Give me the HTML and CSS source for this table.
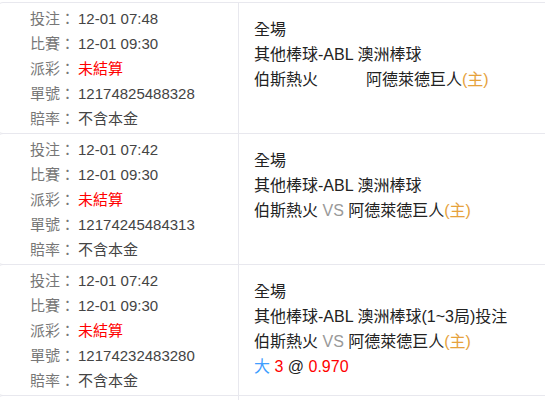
FILE: index.html
```html
<!DOCTYPE html>
<html lang="zh-Hant">
<head>
    <meta charset="UTF-8">
    <meta name="viewport" content="width=device-width, initial-scale=1.0">
    <title>注單記錄</title>
    <link rel="stylesheet" href="styles.css">
</head>
<body>
    <div class="bet-list">
        <!-- 注單 1 -->
        <div class="bet-row">
            <div class="bet-info">
                <div class="info-line"><span class="info-label">投注：</span><span class="info-value">12-01 07:48</span></div>
                <div class="info-line"><span class="info-label">比賽：</span><span class="info-value">12-01 09:30</span></div>
                <div class="info-line"><span class="info-label">派彩：</span><span class="info-value status-open">未結算</span></div>
                <div class="info-line"><span class="info-label">單號：</span><span class="info-value">12174825488328</span></div>
                <div class="info-line"><span class="info-label">賠率：</span><span class="info-value">不含本金</span></div>
            </div>
            <div class="bet-detail">
                <div class="detail-line">全場</div>
                <div class="detail-line">其他棒球-ABL 澳洲棒球</div>
                <div class="detail-line">伯斯熱火<span class="vs-blank"></span>阿德萊德巨人<span class="home">(主)</span></div>
            </div>
        </div>

        <!-- 注單 2 -->
        <div class="bet-row">
            <div class="bet-info">
                <div class="info-line"><span class="info-label">投注：</span><span class="info-value">12-01 07:42</span></div>
                <div class="info-line"><span class="info-label">比賽：</span><span class="info-value">12-01 09:30</span></div>
                <div class="info-line"><span class="info-label">派彩：</span><span class="info-value status-open">未結算</span></div>
                <div class="info-line"><span class="info-label">單號：</span><span class="info-value">12174245484313</span></div>
                <div class="info-line"><span class="info-label">賠率：</span><span class="info-value">不含本金</span></div>
            </div>
            <div class="bet-detail">
                <div class="detail-line">全場</div>
                <div class="detail-line">其他棒球-ABL 澳洲棒球</div>
                <div class="detail-line">伯斯熱火 <span class="vs">VS</span> 阿德萊德巨人<span class="home">(主)</span></div>
            </div>
        </div>

        <!-- 注單 3 -->
        <div class="bet-row">
            <div class="bet-info">
                <div class="info-line"><span class="info-label">投注：</span><span class="info-value">12-01 07:42</span></div>
                <div class="info-line"><span class="info-label">比賽：</span><span class="info-value">12-01 09:30</span></div>
                <div class="info-line"><span class="info-label">派彩：</span><span class="info-value status-open">未結算</span></div>
                <div class="info-line"><span class="info-label">單號：</span><span class="info-value">12174232483280</span></div>
                <div class="info-line"><span class="info-label">賠率：</span><span class="info-value">不含本金</span></div>
            </div>
            <div class="bet-detail">
                <div class="detail-line">全場</div>
                <div class="detail-line">其他棒球-ABL 澳洲棒球(1~3局)投注</div>
                <div class="detail-line">伯斯熱火 <span class="vs">VS</span> 阿德萊德巨人<span class="home">(主)</span></div>
                <div class="detail-line"><span class="pick">大</span> <span class="odds">3</span> @ <span class="odds">0.970</span></div>
            </div>
        </div>

        <!-- 下一筆注單（畫面外） -->
        <div class="bet-row bet-row-next">
            <div class="bet-info"></div>
            <div class="bet-detail"></div>
        </div>
    </div>
</body>
</html>
```

FILE: styles.css
```css
:root {
    --border-color: #e8e8ee;
    --label-color: #777;
    --value-color: #444;
    --text-dark: #222;
    --red: #ff0000;
    --orange: #e6a23c;
    --blue: #409eff;
}

body {
    margin: 0;
    overflow: hidden;
    background: #fff;
    font-family: "Liberation Sans", "Noto Sans CJK TC", sans-serif;
}

.bet-list {
    padding-top: 2px;
    margin-left: -3px;
    width: 620px;
}

.bet-row {
    display: flex;
    border: 1px solid var(--border-color);
    border-radius: 6px;
    margin-bottom: -1px;
}

.bet-row-next {
    height: 20px;
}

.bet-info {
    width: 208px;
    flex-shrink: 0;
    padding: 3px 0 2px 32px;
    border-right: 1px solid var(--border-color);
    font-size: 15px;
    line-height: 25px;
}

.info-line {
    white-space: nowrap;
}

.info-label {
    color: var(--label-color);
    margin-right: 3px;
}

.info-value {
    color: var(--value-color);
}

.status-open {
    color: var(--red);
}

.bet-detail {
    flex: 1;
    padding: 14px 0 0 15px;
    font-size: 16px;
    line-height: 25px;
    color: var(--text-dark);
}

.detail-line {
    white-space: nowrap;
}

.vs {
    color: #999;
}

.vs-blank {
    display: inline-block;
    width: 48px;
}

.home {
    color: var(--orange);
}

.pick {
    color: var(--blue);
}

.odds {
    color: var(--red);
}
```
